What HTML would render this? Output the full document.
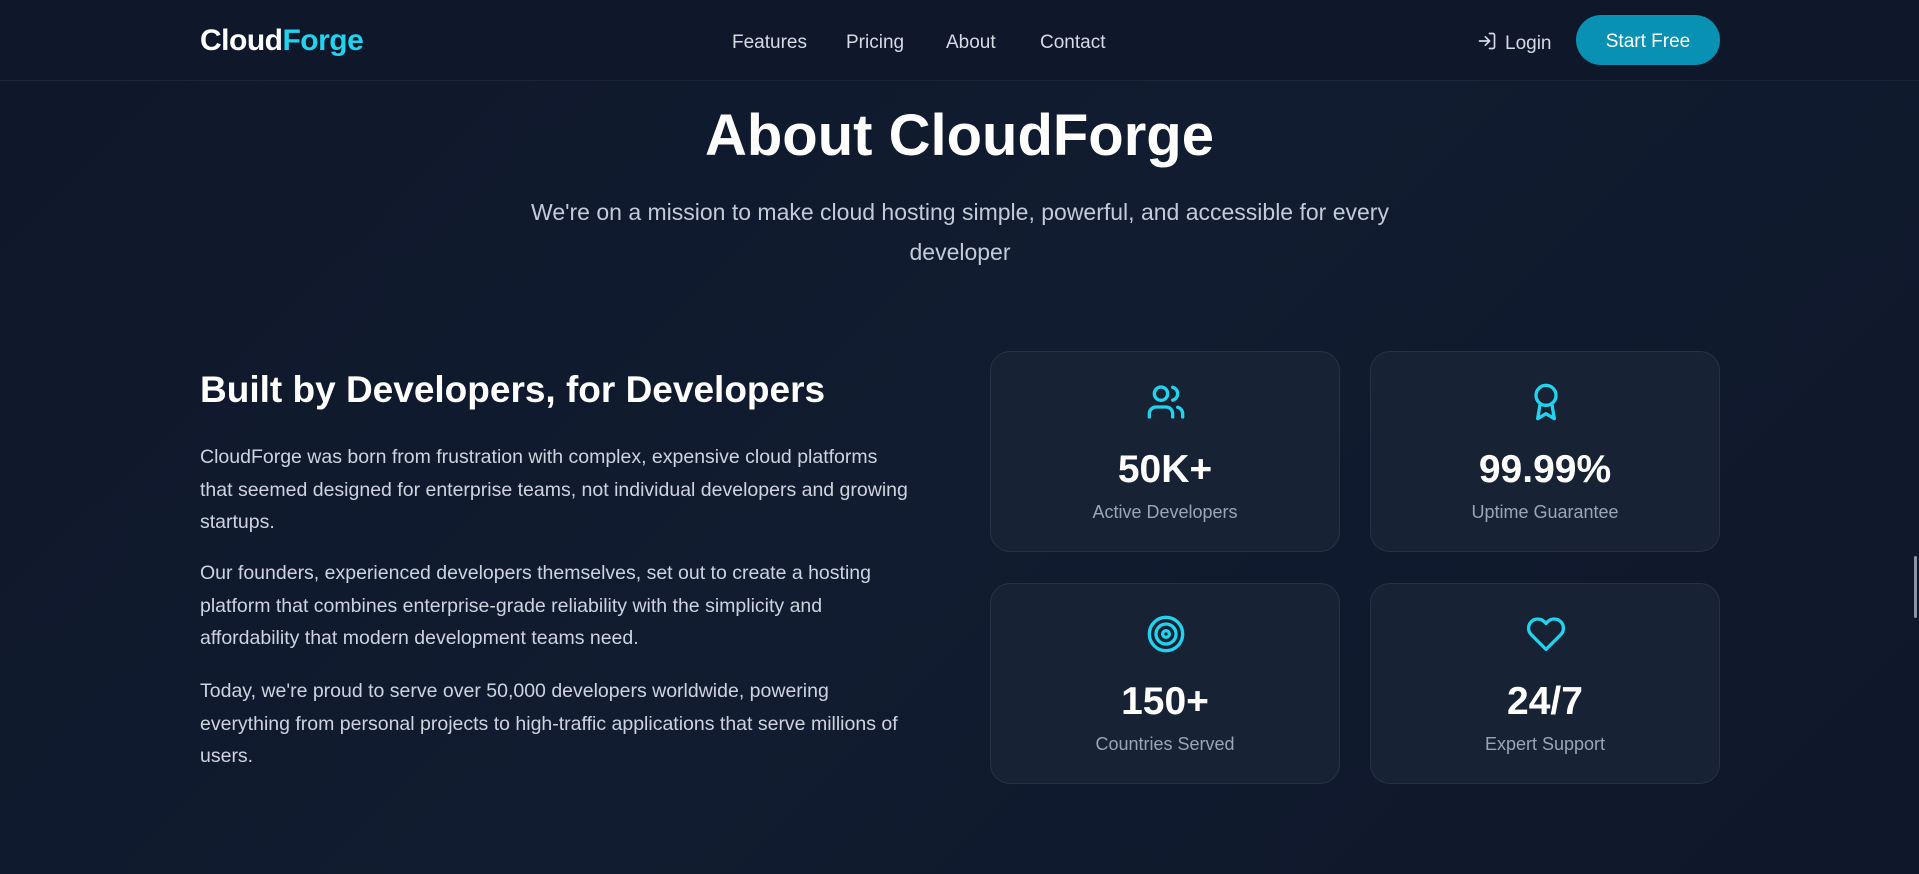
<!DOCTYPE html>
<html><head><meta charset="utf-8"><style>
*{margin:0;padding:0;box-sizing:border-box}
body{width:1919px;height:874px;overflow:hidden;background:linear-gradient(135deg,#0f172a 0%,#111c30 50%,#0f172a 100%);font-family:"Liberation Sans",sans-serif;color:#fff;position:relative}
nav{position:absolute;left:0;top:0;width:1919px;height:81px;border-bottom:1px solid #1c2537;background:#0f172a}
.logo{position:absolute;left:200px;top:24px;font-size:30px;font-weight:bold;letter-spacing:-0.5px}
.logo span{color:#22d3ee}
.links a{position:absolute;top:32px;font-size:19px;color:#d5dbe5;text-decoration:none}
.login{position:absolute;left:1477px;top:31px;font-size:19px;color:#d5dbe5}
.btn{position:absolute;left:1576px;top:15px;width:144px;height:50px;border-radius:25px;background:#0891b2;font-size:19px;text-align:center;line-height:54px}
h1{position:absolute;left:0;width:1919px;top:102px;text-align:center;font-size:58px;font-weight:bold}
.sub{position:absolute;left:480px;width:960px;top:192px;text-align:center;font-size:23px;line-height:40px;color:#c3cbd8}
h2{position:absolute;left:200px;top:369px;font-size:37px;font-weight:bold}
.p{position:absolute;left:200px;width:760px;font-size:19.5px;line-height:32.5px;color:#cdd4df;white-space:nowrap}
.card{position:absolute;width:350px;height:201px;border:1px solid #263247;border-radius:20px;background:#172235;text-align:center}
.card svg{position:absolute;left:155px;top:30px}
.num{position:absolute;left:0;right:0;top:96px;font-size:39px;font-weight:bold}
.lab{position:absolute;left:0;right:0;top:150px;font-size:18px;color:#9aa5b6}
</style></head><body>
<nav>
<div class="logo">Cloud<span>Forge</span></div>
<div class="links"><a style="left:732px">Features</a><a style="left:846px">Pricing</a><a style="left:946px">About</a><a style="left:1040px">Contact</a></div>
<div class="login"><svg width="20" height="20" viewBox="0 0 24 24" fill="none" stroke="#d5dbe5" stroke-width="2" stroke-linecap="round" stroke-linejoin="round" style="vertical-align:-2px;margin-right:8px"><path d="M15 3h4a2 2 0 0 1 2 2v14a2 2 0 0 1-2 2h-4"/><path d="M10 17l5-5-5-5"/><path d="M15 12H3"/></svg>Login</div>
<div class="btn">Start Free</div>
</nav>
<h1>About CloudForge</h1>
<div class="sub">We're on a mission to make cloud hosting simple, powerful, and accessible for every developer</div>
<h2>Built by Developers, for Developers</h2>
<div class="p" style="top:441px">CloudForge was born from frustration with complex, expensive cloud platforms<br>that seemed designed for enterprise teams, not individual developers and growing<br>startups.</div>
<div class="p" style="top:557px">Our founders, experienced developers themselves, set out to create a hosting<br>platform that combines enterprise-grade reliability with the simplicity and<br>affordability that modern development teams need.</div>
<div class="p" style="top:675px">Today, we're proud to serve over 50,000 developers worldwide, powering<br>everything from personal projects to high-traffic applications that serve millions of<br>users.</div>

<div class="card" style="left:990px;top:351px"><svg width="40" height="40" viewBox="0 0 24 24" fill="none" stroke="#22d3ee" stroke-width="2" stroke-linecap="round" stroke-linejoin="round"><path d="M16 21v-2a4 4 0 0 0-4-4H6a4 4 0 0 0-4 4v2"/><circle cx="9" cy="7" r="4"/><path d="M22 21v-2a4 4 0 0 0-3-3.87"/><path d="M16 3.13a4 4 0 0 1 0 7.75"/></svg><div class="num">50K+</div><div class="lab">Active Developers</div></div>
<div class="card" style="left:1370px;top:351px"><svg width="40" height="40" viewBox="0 0 24 24" fill="none" stroke="#22d3ee" stroke-width="2" stroke-linecap="round" stroke-linejoin="round"><circle cx="12" cy="8" r="6"/><path d="M15.48 12.89L17 22l-5-3-5 3 1.52-9.11"/></svg><div class="num">99.99%</div><div class="lab">Uptime Guarantee</div></div>
<div class="card" style="left:990px;top:583px"><svg width="40" height="40" viewBox="0 0 24 24" fill="none" stroke="#22d3ee" stroke-width="2" stroke-linecap="round" stroke-linejoin="round"><circle cx="12" cy="12" r="10"/><circle cx="12" cy="12" r="6"/><circle cx="12" cy="12" r="2"/></svg><div class="num">150+</div><div class="lab">Countries Served</div></div>
<div class="card" style="left:1370px;top:583px"><svg width="40" height="40" viewBox="0 0 24 24" fill="none" stroke="#22d3ee" stroke-width="2" stroke-linecap="round" stroke-linejoin="round"><path d="M20.84 4.61a5.5 5.5 0 0 0-7.78 0L12 5.67l-1.06-1.06a5.5 5.5 0 0 0-7.78 7.78l1.06 1.06L12 21.23l7.78-7.78 1.06-1.06a5.5 5.5 0 0 0 0-7.78z"/></svg><div class="num">24/7</div><div class="lab">Expert Support</div></div>
<div style="position:absolute;left:1914px;top:556px;width:3px;height:62px;background:#8b95a5;border-radius:2px"></div>
</body></html>
